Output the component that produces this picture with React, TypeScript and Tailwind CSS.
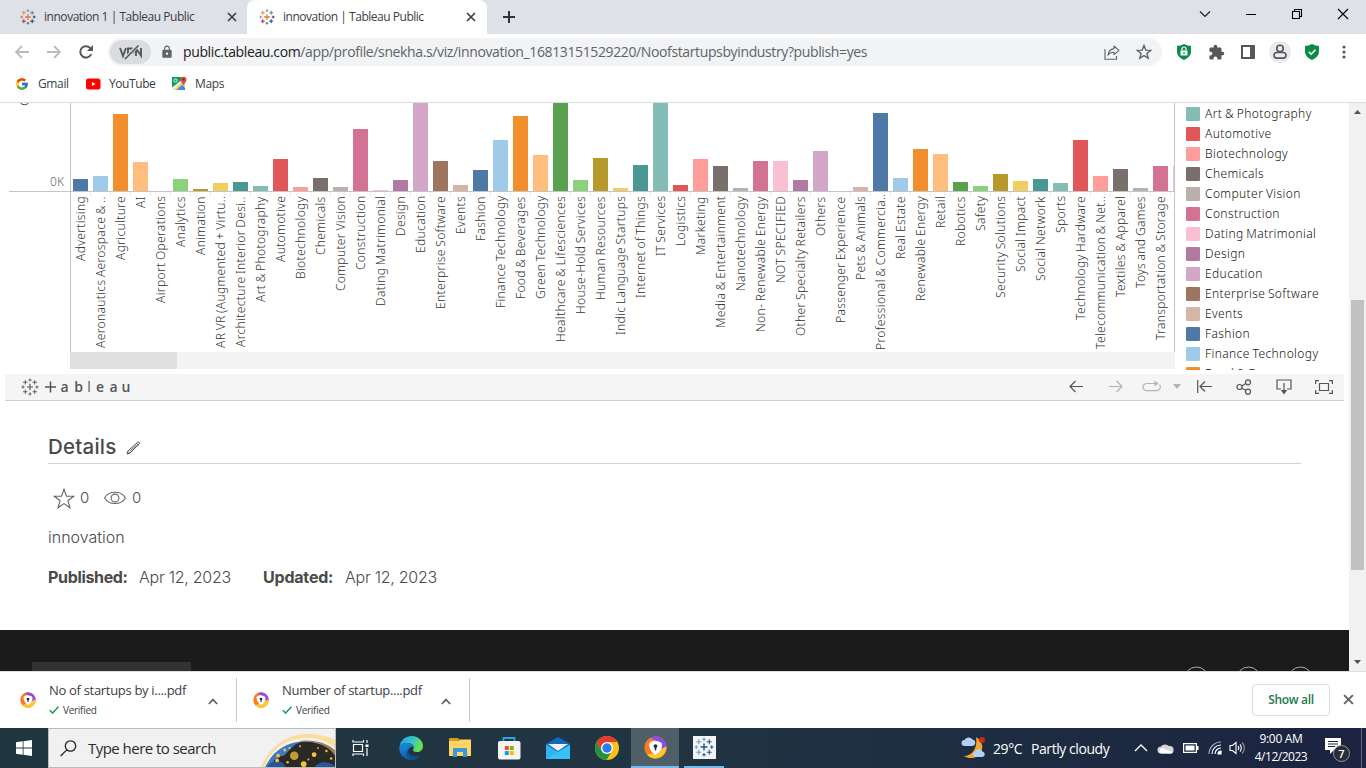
import React from "react";
import { FcGoogle } from "react-icons/fc";
import { MdExtension, MdLock } from "react-icons/md";

const C = {
  blue: "#4e79a7", sky: "#a0cbe8", orange: "#f28e2b", peach: "#ffbe7d", green: "#59a14f",
  lime: "#8cd17d", olive: "#b6992d", yellow: "#f1ce63", teal: "#499894", aqua: "#86bcb6",
  red: "#e15759", salmon: "#ff9d9a", stone: "#79706e", sand: "#bab0ac", rose: "#d37295",
  pink: "#fabfd2", plum: "#b07aa1", lilac: "#d4a6c8", brown: "#9d7660", tan: "#d7b5a6",
};

const bars: [string, number, string][] = [
  ["Advertising", 12, C.blue], ["Aeronautics Aerospace & ..", 15, C.sky], ["Agriculture", 77, C.orange],
  ["AI", 29, C.peach], ["Airport Operations", 0, C.green], ["Analytics", 12, C.lime],
  ["Animation", 2, C.olive], ["AR VR (Augmented + Virtu..", 8, C.yellow], ["Architecture Interior Desi..", 9, C.teal],
  ["Art & Photography", 5, C.aqua], ["Automotive", 32, C.red], ["Biotechnology", 4, C.salmon],
  ["Chemicals", 13, C.stone], ["Computer Vision", 4, C.sand], ["Construction", 62, C.rose],
  ["Dating Matrimonial", 1, C.pink], ["Design", 11, C.plum], ["Education", 88, C.lilac],
  ["Enterprise Software", 30, C.brown], ["Events", 6, C.tan], ["Fashion", 21, C.blue],
  ["Finance Technology", 51, C.sky], ["Food & Beverages", 75, C.orange], ["Green Technology", 36, C.peach],
  ["Healthcare & Lifesciences", 88, C.green], ["House-Hold Services", 11, C.lime], ["Human Resources", 33, C.olive],
  ["Indic Language Startups", 3, C.yellow], ["Internet of Things", 26, C.teal], ["IT Services", 88, C.aqua],
  ["Logistics", 6, C.red], ["Marketing", 32, C.salmon], ["Media & Entertainment", 25, C.stone],
  ["Nanotechnology", 3, C.sand], ["Non- Renewable Energy", 30, C.rose], ["NOT SPECIFIED", 30, C.pink],
  ["Other Specialty Retailers", 11, C.plum], ["Others", 40, C.lilac], ["Passenger Experience", 0, C.brown],
  ["Pets & Animals", 4, C.tan], ["Professional & Commercia..", 78, C.blue], ["Real Estate", 13, C.sky],
  ["Renewable Energy", 42, C.orange], ["Retail", 37, C.peach], ["Robotics", 9, C.green],
  ["Safety", 5, C.lime], ["Security Solutions", 17, C.olive], ["Social Impact", 10, C.yellow],
  ["Social Network", 12, C.teal], ["Sports", 8, C.aqua], ["Technology Hardware", 51, C.red],
  ["Telecommunication & Net..", 15, C.salmon], ["Textiles & Apparel", 22, C.stone], ["Toys and Games", 3, C.sand],
  ["Transportation & Storage", 25, C.rose], ["", 25, C.pink],
];

const legend: [string, string][] = [
  ["Art & Photography", C.aqua], ["Automotive", C.red], ["Biotechnology", C.salmon], ["Chemicals", C.stone],
  ["Computer Vision", C.sand], ["Construction", C.rose], ["Dating Matrimonial", C.pink], ["Design", C.plum],
  ["Education", C.lilac], ["Enterprise Software", C.brown], ["Events", C.tan], ["Fashion", C.blue],
  ["Finance Technology", C.sky], ["Food & Beverages", C.orange],
];

const cross = (x: number, y: number, r: number) => `M${x - r} ${y}h${2 * r}M${x} ${y - r}v${2 * r}`;

function TableauMark({ size, colors, width = 1 }: { size: number; colors: string[]; width?: number }) {
  const marks: [number, number, number][] = [
    [8, 8, 2.8], [8, 1.8, 1.4], [8, 14.2, 1.4], [1.8, 8, 1.4], [14.2, 8, 1.4],
    [3.8, 3.8, 2], [12.2, 3.8, 2], [3.8, 12.2, 2], [12.2, 12.2, 2],
  ];
  return (
    <svg width={size} height={size} viewBox="0 0 16 16" className="shrink-0" fill="none">
      {marks.map(([x, y, r], i) => (
        <path key={i} d={cross(x, y, r)} stroke={colors[i % colors.length]} strokeWidth={i === 0 ? width * 1.3 : width} />
      ))}
    </svg>
  );
}

const brand = ["#e8762c", "#7199a6", "#5c6692", "#7199a6", "#1f457e", "#eb912c", "#59879b", "#c72035", "#1f457e"];

function Close({ size, color }: { size: number; color: string }) {
  return (
    <svg width={size} height={size} viewBox="0 0 10 10" className="shrink-0">
      <path d="M1 1l8 8M9 1l-8 8" stroke={color} strokeWidth="1.7" />
    </svg>
  );
}

function TabStrip() {
  return (
    <div className="flex h-[34px] bg-[#dee1e6] text-[12px] leading-[34px] text-[#3c4043]">
      <div className="flex w-[247px] items-center pl-5 pr-[10px]">
        <TableauMark size={16} colors={brand} />
        <span className="ml-2 flex-1 whitespace-nowrap tracking-[-0.46px]">innovation 1 | Tableau Public</span>
        <Close size={10} color="#3c4043" />
      </div>
      <div className="flex w-[240px] items-center rounded-t-lg bg-white pl-3 pr-[11px]">
        <TableauMark size={16} colors={brand} />
        <span className="ml-2 flex-1 whitespace-nowrap tracking-[-0.48px]">innovation | Tableau Public</span>
        <Close size={10} color="#3c4043" />
      </div>
      <div className="flex flex-1 items-center pl-4">
        <svg width="12" height="12" viewBox="0 0 12 12"><path d="M6 0v12M0 6h12" stroke="#303338" strokeWidth="2" /></svg>
      </div>
      <div className="flex h-[28px] items-center gap-[34px] pr-[17px]">
        <svg width="12" height="12" viewBox="0 0 12 12"><path d="M1 3.5l5 5 5-5" fill="none" stroke="#222" strokeWidth="1.2" /></svg>
        <svg width="12" height="12" viewBox="0 0 12 12"><path d="M1 6.5h10" stroke="#000" /></svg>
        <svg width="12" height="12" viewBox="0 0 12 12"><path d="M1.5 3.5h7v7h-7zM3.5 3V1.5h7v7H9" fill="none" stroke="#000" strokeWidth="1.1" /></svg>
        <svg width="12" height="12" viewBox="0 0 12 12"><path d="M1 1l10 10M11 1L1 11" stroke="#000" strokeWidth="1.1" /></svg>
      </div>
    </div>
  );
}

function Shield({ kind }: { kind: "lock" | "check" }) {
  return (
    <svg width="16" height="18" viewBox="0 0 16 18">
      <path d="M8 1c2.5 1.3 4.500 1.800 7 2v5.500C15 12.500 12 15 8 17c-4-2-7-4.500-7-8.500V3c2.500-.2 4.500-.7 7-2z" fill="#0b8a48" />
      {kind === "lock" ? (
        <g><rect x="4.500" y="7.500" width="7" height="5" rx=".5" fill="#fff" /><path d="M6 7.500V6a2 2 0 0 1 4 0v1.500" fill="none" stroke="#fff" strokeWidth="1.200" /><path d="M8 9v2" stroke="#0b8a48" strokeWidth="1.200" /></g>
      ) : (
        <path d="M4.800 8.800l2.400 2.400 4.200-4.400" fill="none" stroke="#fff" strokeWidth="1.600" />
      )}
    </svg>
  );
}

const cell = "flex w-8 items-center justify-center";

function Toolbar() {
  return (
    <div className="flex h-[36px] items-center pl-[6px] pr-[6px]">
      <div className={cell}><svg width="14" height="14" viewBox="0 0 14 14"><path d="M14 7H1.500M7 1L1 7l6 6" fill="none" stroke="#babcbe" strokeWidth="1.800" /></svg></div>
      <div className={cell}><svg width="14" height="14" viewBox="0 0 14 14"><path d="M0 7h12.500M7 1l6 6-6 6" fill="none" stroke="#babcbe" strokeWidth="1.800" /></svg></div>
      <div className={cell}>
        <svg width="14" height="14" viewBox="0 0 14 14"><path d="M12.200 9.200A5.700 5.700 0 1 1 11.600 3.500" fill="none" stroke="#54575b" strokeWidth="2" /><path d="M14 0v6H8z" fill="#54575b" /></svg>
      </div>
      <div className="ml-[6px] flex h-[28px] flex-1 items-center rounded-full bg-[#f1f3f4] pl-[2px]">
        <div className="flex h-6 w-[41px] items-center justify-center rounded-full bg-[#dadce0]">
          <svg width="26" height="18" viewBox="0 0 26 18">
            <path d="M2 5l3 8 3-8M10 13V5.500h3.500a2 2 0 0 1 0 4.500H10M18 13V5.500l5 7V5" fill="none" stroke="#54575b" strokeWidth="1.900" />
            <path d="M8 15.500L20 2" stroke="#dadce0" strokeWidth="3.500" /><path d="M7 16L20.500 2.500" stroke="#54575b" strokeWidth="1.600" />
          </svg>
        </div>
        <MdLock size={14} color="#5f6368" className="ml-[9px] shrink-0" />
        <span className="ml-[9px] flex-1 whitespace-nowrap text-[14px] leading-[28px] tracking-[-0.374px] text-[#5f6368]"><span className="text-[#202124]">public.tableau.com</span>/app/profile/snekha.s/viz/innovation_16813151529220/Noofstartupsbyindustry?publish=yes</span>
        <div className={cell}>
          <svg width="16" height="15" viewBox="0 0 16 15" fill="none" stroke="#5f6368" strokeWidth="1.100"><path d="M1 4v10.200h11.500V11" /><path d="M10 1l5 4.300-5 4.300V7.200c-2.500 0-4.500.6-6 3 .3-3.500 2.200-6 6-6.600z" strokeLinejoin="round" /></svg>
        </div>
        <div className={cell}>
          <svg width="16" height="16" viewBox="0 0 16 16"><path d="M8 1.500l1.800 4.600 4.900.3-3.800 3.100 1.300 4.800L8 11.600l-4.200 2.700 1.300-4.800L1.300 6.400l4.900-.3z" fill="none" stroke="#5f6368" strokeWidth="1.400" /></svg>
        </div>
        <div className="w-[2px]" />
      </div>
      <div className="flex w-[198px] pl-[6px]">
        <div className={cell}><Shield kind="lock" /></div>
        <div className={cell}><MdExtension size={17} color="#54575b" /></div>
        <div className={cell}><svg width="14" height="14" viewBox="0 0 14 14"><path d="M1 1h12v12H1z" fill="none" stroke="#54575b" strokeWidth="2" /><path d="M9 1h4v12H9z" fill="#54575b" /></svg></div>
        <div className={cell}>
          <div className="flex h-[22px] w-[22px] items-center justify-center rounded-full bg-[#e8eaed]">
            <svg width="14" height="16" viewBox="0 0 14 16" fill="none" stroke="#54575b" strokeWidth="1.600"><circle cx="7" cy="4.500" r="3.200" /><rect x="1" y="8.500" width="12" height="5.600" rx="2.800" /></svg>
          </div>
        </div>
        <div className={cell}><Shield kind="check" /></div>
        <div className={cell}><svg width="4" height="14" viewBox="0 0 4 14" fill="#54575b"><circle cx="2" cy="2" r="1.600" /><circle cx="2" cy="7" r="1.600" /><circle cx="2" cy="12" r="1.600" /></svg></div>
      </div>
    </div>
  );
}

function Bookmarks() {
  return (
    <div className="flex h-[33px] items-center border-b border-[#dadce0] pb-[5px] pl-[15px] text-[12px] text-[#3c4043]">
      <FcGoogle size={14} />
      <span className="ml-[9px] w-[48px] tracking-[-0.37px]">Gmail</span>
      <svg width="15" height="12" viewBox="0 0 15 12"><rect x="0" y=".5" width="14.500" height="11" rx="2.500" fill="#f00" /><path d="M6 4v4l3.500-2z" fill="#fff" /></svg>
      <span className="ml-2 w-[63px] tracking-[-0.42px]">YouTube</span>
      <svg width="15" height="15" viewBox="0 0 15 15">
        <path d="M0 1h13v13H0z" fill="#0f9d58" /><path d="M3 14l5.500-6 5 6z" fill="#4285f4" /><path d="M0 14V11.500L9.500 4l2 2L3 14z" fill="#fff" opacity=".9" /><path d="M8 7l5 5V4z" fill="#cfd3d6" />
        <path d="M2 14L9 7l1.500 1.500L4.500 14z" fill="#fc3" />
        <path d="M11.500 10c0-2.500-3-3.500-3-6.300a3 3 0 0 1 6 0c0 2.800-3 3.800-3 6.300z" fill="#dd4b3e" /><circle cx="11.500" cy="3.500" r="1.100" fill="#7c2118" /><circle cx="3.500" cy="4.500" r="1.600" fill="none" stroke="#fff" strokeWidth=".9" />
      </svg>
      <span className="ml-2 tracking-[-0.36px]">Maps</span>
    </div>
  );
}

const label = "font-['Noto_Sans','Open_Sans',sans-serif] font-light text-[12px] whitespace-nowrap";

function Chart() {
  return (
    <div className="flex h-[267px] overflow-hidden">
      <div className="flex w-[70px] flex-col pl-[9px]">
        <div className={`${label} flex h-[89px] flex-col justify-between overflow-hidden border-b border-[#c4c4c4] text-[#666]`}>
          <svg width="10" height="3" viewBox="0 0 10 3" className="ml-[11px]"><path d="M1 0c0 2.200 7 2.200 7 0" fill="none" stroke="#333" /></svg>
          <span className="self-end pr-[6px] leading-[18px]">0K</span>
        </div>
      </div>
      <div className="flex w-[1105px] flex-col">
        <div className="flex h-[249px] overflow-hidden border-x border-[#c4c4c4]">
          {bars.map(([name, h, color], i) => (
            <div key={i} className="flex w-5 shrink-0 flex-col">
              <div className="flex h-[89px] flex-col justify-end border-b border-[#c4c4c4] pl-[2px]">
                <div className="w-[15px]" style={{ height: h, backgroundColor: color }} />
              </div>
              <div className="ml-[19px] h-1 w-px bg-[#ebebeb]" />
              <div className={`${label} flex w-5 rotate-180 items-end [writing-mode:vertical-rl] [word-spacing:-1px] h-[154px] leading-5 tracking-[0.36px] text-[#333]`}>
                <span className="h-full w-5 text-right">{name}</span>
              </div>
            </div>
          ))}
        </div>
        <div className="mt-0 h-[17px] bg-[#f4f4f4]"><div className="h-full w-[107px] bg-[#e0e0e0]" /></div>
      </div>
      <div className="flex flex-1 flex-col pl-[11px] pt-[1px]">
        {legend.map(([name, color]) => (
          <div key={name} className="flex h-5 shrink-0 items-center">
            <div className="h-[14px] w-[14px] rounded-[1px]" style={{ backgroundColor: color }} />
            <span className={`${label} ml-[5px] leading-5 tracking-[0.4px] [word-spacing:-0.8px] text-[#111]`}>{name}</span>
          </div>
        ))}
      </div>
    </div>
  );
}

function VizBar() {
  const s = { fill: "none", stroke: "#555", strokeWidth: 1.2 };
  return (
    <div className="mx-[5px] mt-1 flex h-[27px] items-center border-b border-[#d0d0d0] bg-[#f5f5f5] pb-px">
      <div className="ml-[16px] flex"><TableauMark size={18} colors={["#555"]} width={0.8} /></div>
      <div className="ml-[4px] flex flex-1 text-center font-['Open_Sans',sans-serif] text-[14px] font-semibold leading-[26px] text-[#555]">
        <span className="flex w-[14px] items-center justify-center"><svg width="11" height="12" viewBox="0 0 11 12"><path d="M5.500 0.500v11M0 6h11" stroke="#555" strokeWidth="1.500" /></svg></span>
        <span className="w-[15px]">a</span><span className="w-[13px]">b</span><span className="w-[8px] font-normal">l</span>
        <span className="w-[14px]">e</span><span className="w-[13px]">a</span><span className="w-[12px]">u</span>
      </div>
      <svg className="mr-[26px]" width="14" height="13" viewBox="0 0 14 13" {...s}><path d="M14 6.500H1M6.500 1L1 6.500 6.500 12" /></svg>
      <svg className="mr-[19px]" width="14" height="13" viewBox="0 0 14 13" {...s} stroke="#b4b4b4"><path d="M0 6.500h13M7.500 1L13 6.500 7.500 12" /></svg>
      <svg width="20" height="13" viewBox="0 0 20 13" {...s} stroke="#b4b4b4"><path d="M13 3.500H5a4 3.600 0 0 0 0 7.200h10a3.500 3.600 0 0 0 2.500-6M10 3.500h5" /><path d="M12.500.5v6l4-3z" fill="#b4b4b4" stroke="none" /></svg>
      <svg className="ml-[11px] mr-[16px]" width="8" height="5" viewBox="0 0 8 5"><path d="M0 0h8L4 5z" fill="#b4b4b4" /></svg>
      <svg className="mr-[24px]" width="15" height="13" viewBox="0 0 15 13" {...s}><path d="M.7 0v13M15 6.500H3M8 1.500L3 6.500l5 5" /></svg>
      <svg className="mr-[24px]" width="16" height="16" viewBox="0 0 16 16" {...s}><circle cx="3.500" cy="8" r="2.500" /><circle cx="12" cy="3.300" r="2.500" /><circle cx="12" cy="12.700" r="2.500" /><path d="M5.800 6.900l4-2.300M5.800 9.100l4 2.300" /></svg>
      <svg className="mr-[23px]" width="16" height="16" viewBox="0 0 16 16" {...s}><path d="M5 10H1V1h14v9h-4M8 4v8" /><path d="M4.800 11h6.400L8 15.500z" fill="#555" stroke="none" /></svg>
      <svg className="mr-[11px]" width="18" height="14" viewBox="0 0 18 14" {...s}><path d="M4.500 3.500h9v7h-9zM.6 4V.6H4M14 .6h3.400V4M17.400 10v3.400H14M4 13.400H.6V10" /></svg>
    </div>
  );
}

const thin = "font-['Inter','Liberation_Sans',sans-serif] font-light leading-6 text-[#4a4a4a]";

function Details() {
  return (
    <div className="flex h-[229px] flex-col pl-12 pr-12 pt-[32px] font-['Inter','Liberation_Sans',sans-serif]">
      <div className="flex h-[31px] items-center border-b border-[#d4d4d4] pb-[2px]">
        <h2 className="text-[20.500px] font-medium leading-[28px] tracking-[0.22px] text-[#4a4a4a]">Details</h2>
        <svg className="ml-[10px] mt-[1px]" width="15" height="14" viewBox="0 0 15 14" fill="none" stroke="#555" strokeWidth="1"><path d="M1 13l.8-3L11.800 1.200c.8-.7 2.400.6 1.700 1.500L4 12zM1.800 10.200L3.600 12M10.500 2.300l2 1.800M4 10.200l6.500-6" /></svg>
      </div>
      <div className="mt-[22px] flex h-6 items-center">
        <svg className="ml-[5px]" width="22" height="21" viewBox="0 0 22 21"><path d="M11 1.200l2.500 6.900 7.200.2-5.800 4.400 2.100 7.100-6-4.200-6 4.200 2.100-7.100L1.300 8.300l7.200-.2z" fill="none" stroke="#666" strokeWidth="1.100" /></svg>
        <span className={`${thin} ml-[5px] w-[24px] text-[15px]`}>0</span>
        <svg width="22" height="14" viewBox="0 0 22 14" fill="none" stroke="#666" strokeWidth="1.100"><path d="M.6 7C5 -.6 17 -.6 21.400 7 17 14.300 5 14.300.6 7z" /><circle cx="11" cy="7" r="3.900" /></svg>
        <span className={`${thin} ml-[6px] text-[15px]`}>0</span>
      </div>
      <p className={`${thin} mt-[15px] text-[16px]`}>innovation</p>
      <div className={`${thin} mt-4 flex whitespace-nowrap text-[16px]`}>
        <span className="w-[91px] font-bold tracking-[-0.34px]">Published:</span>
        <span className="w-[124px] tracking-[-0.25px]">Apr 12, 2023</span>
        <span className="w-[82px] font-bold tracking-[-0.2px]">Updated:</span>
        <span className="tracking-[-0.25px]">Apr 12, 2023</span>
      </div>
    </div>
  );
}

function Footer() {
  return (
    <div className="flex h-[41px] items-end overflow-hidden bg-[#1b1b1b] pl-8">
      <div className="h-[9px] w-[159px] bg-[#323232]" />
      <div className="ml-auto flex h-[5px] gap-[27px] pr-[36px]">
        {[0, 1, 2].map((i) => (
          <svg key={i} width="25" height="5" viewBox="0 0 25 5"><circle cx="12.500" cy="13" r="12" fill="none" stroke="#aaa" /></svg>
        ))}
      </div>
    </div>
  );
}

function Scrollbar() {
  return (
    <div className="flex w-[17px] flex-col items-center justify-between bg-[#f1f1f1]">
      <svg className="mt-[7px]" width="7" height="4" viewBox="0 0 7 4"><path d="M0 4l3.500-4L7 4z" fill="#505050" /></svg>
      <div className="mt-[186px] h-[270px] w-[13px] bg-[#c1c1c1]" />
      <svg className="mb-[7px] mt-auto" width="7" height="4" viewBox="0 0 7 4"><path d="M0 0l3.500 4L7 0z" fill="#505050" /></svg>
    </div>
  );
}

function Swirl({ size }: { size: number }) {
  return (
    <svg width={size} height={size} viewBox="0 0 24 24" className="shrink-0">
      <circle cx="12" cy="12" r="11.500" fill="#ff7a1a" />
      <path d="M7 1.700A11.500 11.500 0 0 1 23.400 13L17 15 12 5z" fill="#8a4df0" />
      <path d="M23.400 11A11.500 11.500 0 0 1 3 19.200l7-1.200 9-5z" fill="#ffc62e" />
      <path d="M5 8C9 3 15 5 18.500 7.500c1 6-2 9.500-6.500 12-4-2-6-5.500-7-11.500z" fill="#fff" />
      <circle cx="12" cy="10.500" r="2" fill="#222b4a" /><path d="M11.200 11h1.600v4h-1.600z" fill="#222b4a" />
    </svg>
  );
}

function Download({ name }: { name: string }) {
  return (
    <div className="flex w-[233px] items-center">
      <div className="flex flex-1 items-center pl-4">
        <Swirl size={16} />
        <div className="ml-[13px] flex flex-col">
          <span className="whitespace-nowrap text-[13px] leading-[19px] tracking-[-0.31px] text-[#3c4043]">{name}</span>
          <span className="flex h-5 items-center pt-px text-[10px] tracking-[-0.27px] text-[#3c4043]">
            <svg className="mr-[4px]" width="10" height="8" viewBox="0 0 10 8"><path d="M.7 4.200l2.900 2.900L9.400.8" fill="none" stroke="#1e9e58" strokeWidth="1.500" /></svg>Verified
          </span>
        </div>
      </div>
      <svg className="mr-[18px] mt-[2px]" width="10" height="7" viewBox="0 0 10 7"><path d="M.8 6L5 1.600 9.200 6" fill="none" stroke="#5f6368" strokeWidth="1.700" /></svg>
      <div className="h-[44px] w-px bg-[#c8cacd]" />
    </div>
  );
}

function Downloads() {
  return (
    <div className="flex h-[57px] items-center border-t border-[#dadce0] bg-white pl-[4px]">
      <Download name="No of startups by i....pdf" />
      <Download name="Number of startup....pdf" />
      <div className="ml-auto flex items-center pb-px pr-[12px]">
        <div className="flex h-8 w-[78px] items-center justify-center rounded border border-[#dadce0] text-[12px] font-semibold tracking-[-0.3px] text-[#1d7a4a]">Show all</div>
        <span className="ml-[13px]"><Close size={11} color="#5f6368" /></span>
      </div>
    </div>
  );
}

const app = "flex h-full w-[49px] items-center justify-center";

function Taskbar() {
  return (
    <div className="flex h-10 items-center bg-linear-to-r from-[#21373f] via-[#203442] to-[#1b2340] text-white">
      <div className="flex w-12 items-center justify-center">
        <svg width="16" height="16" viewBox="0 0 16 16" fill="#fff"><path d="M0 2.300l6.700-1v6.300H0zM7.500 1.200L16 0v7.600H7.500zM0 8.400h6.700v6.300l-6.700-1zM7.500 8.400H16V16l-8.500-1.200z" /></svg>
      </div>
      <div className="flex h-10 w-[288px] items-center overflow-hidden border border-[#b9bcbc] bg-[#f1f1f1] pl-[11px] text-[#2b2b2b]">
        <svg width="17" height="17" viewBox="0 0 17 17" fill="none" stroke="#222" strokeWidth="1.300"><circle cx="10.500" cy="6" r="5.200" /><path d="M6.800 9.900L.6 16" /></svg>
        <span className="ml-[11px] flex-1 whitespace-nowrap text-[15px] tracking-[-0.53px]">Type here to search</span>
        <svg className="mt-1 shrink-0" width="74" height="36" viewBox="0 0 78 38">
          <path d="M3 38C11 16 28 7 47 6c12 0 22 3 31 10V8C66 3 57 2 47 2 26 3 8 16 0 38z" fill="#fbdc98" />
          <path d="M4 38C12 19 28 10 47 10c12 0 22 4 31 12v16z" fill="#3f78c0" />
          <path d="M33 16C40 9 50 9 58 12c10 2 14 5 20 10v16H10c2-9 8-12 14-13z" fill="#2a2a24" />
          <path d="M36 12c14-5 34 0 42 13v-6C70 12 58 8 44 9z" fill="#9b7d5b" />
          <path d="M6 38c3-8 14-10 19-3l1 3zM56 38c4-7 14-8 22-2v2z" fill="#2a5699" />
          <g fill="#f5c33b"><circle cx="35" cy="25" r="4.500" opacity=".75" /><circle cx="56" cy="24" r="2.500" /><circle cx="45" cy="34" r="3" /><circle cx="25" cy="19" r="1.500" /><circle cx="18" cy="25" r="2" /><circle cx="30" cy="17" r="1.200" /><circle cx="69" cy="20" r="1.300" /><circle cx="60" cy="17" r="1" /><circle cx="74" cy="28" r="1.300" /><circle cx="28" cy="32" r="1.300" /><circle cx="41" cy="15" r="1" /><circle cx="17" cy="30" r="2" /><circle cx="50" cy="29" r="1" /></g>
        </svg>
      </div>
      <div className={app}>
        <svg width="17" height="16" viewBox="0 0 17 16" fill="none" stroke="#fff" strokeWidth="1.200"><path d="M1.500 4.500h9v7h-9zM1 0v2h10.500V0M1 16v-2h10.500v2M15 0v3M15 8v8" /><path d="M13.500 4.500h3v2.500h-3z" fill="#fff" stroke="none" /></svg>
      </div>
      <div className={`${app} ml-[1px]`}>
        <svg width="24" height="24" viewBox="0 0 24 24">
          <defs>
            <linearGradient id="eg" x1="0" y1="0" x2="1" y2="0.300"><stop offset="0" stopColor="#1d9fe0" /><stop offset=".55" stopColor="#35c1d4" /><stop offset="1" stopColor="#6be04d" /></linearGradient>
            <linearGradient id="eb" x1="0" y1="0" x2="0.500" y2="1"><stop offset="0" stopColor="#1a92e0" /><stop offset="1" stopColor="#0d55a8" /></linearGradient>
          </defs>
          <path d="M.5 10C2 3.500 7 0 12.500 0 19 0 24 4.500 24 10c0 4-3 6-6 6-2.500 0-4-1-4-2 0-.8.8-1 .8-2.500C14.800 9 12 7 8.500 7 5 7 2 8 .5 10z" fill="url(#eg)" />
          <path d="M.3 11C1.500 8.500 4.500 7 8 7c3.500 0 6.500 2 6.800 4.300-3-1.300-6 1-5.800 4.200.3 4.500 6 7 12.500 3.800C18.500 23.500 15 24 12 24 5 24-.5 18 .3 11z" fill="url(#eb)" />
          <path d="M9 14c-.5 5 5 8.500 12.700 5-2 3.500-6 5-9 5C7 22 5.500 17 9 14z" fill="#0f4a8c" opacity=".7" />
        </svg>
      </div>
      <div className={app}>
        <svg width="22" height="20" viewBox="0 0 22 20"><path d="M0 0h9l2 2h-2v4H0z" fill="#d99a1c" /><path d="M0 3h9l2-1.500h11V18H0z" fill="#ffd566" /><path d="M4 10h14v9h-4v-5H8v5H4z" fill="#3f97d8" /></svg>
      </div>
      <div className={app}>
        <svg width="24" height="24" viewBox="0 0 24 24"><path d="M6.500 7V2h11v5" fill="none" stroke="#27a8e0" strokeWidth="1.800" /><rect x="1" y="5" width="22.500" height="18.500" rx="2" fill="#f4f4f4" /><path d="M7.800 10h4v4h-4z" fill="#f25022" /><path d="M12.800 10h4v4h-4z" fill="#7fba00" /><path d="M7.800 15h4v4h-4z" fill="#00a4ef" /><path d="M12.800 15h4v4h-4z" fill="#ffb900" /></svg>
      </div>
      <div className={app}>
        <svg width="24" height="22" viewBox="0 0 24 22"><path d="M0 7l12-7 12 7v15H0z" fill="#0f6cbd" /><path d="M0 7.500L12 15l12-7.500V22H0z" fill="#2fb4f0" /><path d="M2 7h20l-10 7z" fill="#f2f2f2" /><path d="M0 22l24-14v14z" fill="#41c8f8" opacity=".6" /></svg>
      </div>
      <div className={app}>
        <svg width="24" height="24" viewBox="0 0 24 24"><circle cx="12" cy="12" r="12" fill="#fbc116" /><path d="M1.600 6A12 12 0 0 1 22.400 6H12L7 15z" fill="#e33b2e" /><path d="M1.600 6A12 12 0 0 0 11.500 24L17 15l-5 2-5-2z" fill="#229342" /><circle cx="12" cy="12" r="6" fill="#fff" /><circle cx="12" cy="12" r="4.700" fill="#2e78f0" /></svg>
      </div>
      <div className="flex h-full w-[48px] items-center justify-center border-b-2 border-[#76b9ed] bg-[#4e5f68]"><Swirl size={23} /></div>
      <div className="ml-[5px] flex h-full w-[40px] items-center justify-center border-b-2 border-[#76b9ed]">
        <div className="flex h-[23px] w-[23px] items-center justify-center bg-[#f3f3f3]"><TableauMark size={20} colors={["#1f5f8f", "#6f9fba"]} width={0.9} /></div>
      </div>
      <div className="ml-auto flex items-center text-[14px]">
        <svg width="25" height="24" viewBox="0 0 25 24"><path d="M15 1c6 4 8 10 5 15-3 6-11 8-17 4 8 0 14-8 12-19z" fill="#f3a72b" /><circle cx="21" cy="4" r="3" fill="#c42b1c" /><path d="M3.500 10a3 3 0 0 1 0-6 4.500 4 0 0 1 8-.5 3.300 3.300 0 0 1 0 6.500zM14 21a3 3 0 0 1 0-5.500 4 4 0 0 1 7.500 0 2.800 2.800 0 0 1 0 5.500z" fill="#b4d0f7" /></svg>
        <span className="ml-[7px] w-[38px] tracking-[-0.4px]">29°C</span>
        <span className="w-[103px] whitespace-nowrap tracking-[-0.43px]">Partly cloudy</span>
        <svg width="14" height="8" viewBox="0 0 14 8"><path d="M1 7l6-6 6 6" fill="none" stroke="#fff" strokeWidth="1.300" /></svg>
        <svg className="ml-[9px]" width="17" height="11" viewBox="0 0 17 11"><path d="M4 10.500a3.500 3.500 0 0 1 0-7A5 4.500 0 0 1 12 3a3.800 3.800 0 0 1 1.500 7.500z" fill="#d6d6d6" /><path d="M4 10.500a3 3 0 0 1 1-5.500l11 4c-.5 1-1.500 1.500-2.500 1.500z" fill="#fff" /></svg>
        <svg className="ml-[9px]" width="16" height="10" viewBox="0 0 16 10"><path d="M.6.6h12.800v8.800H.6z" fill="none" stroke="#fff" strokeWidth="1.200" /><path d="M2.500 2.500h9v5h-9zM14 3h1.500v4H14z" fill="#fff" /></svg>
        <svg className="ml-[9px]" width="14" height="14" viewBox="0 0 14 14" fill="none" stroke="#fff" strokeWidth="1.200"><path d="M1 13A12 12 0 0 1 13 1" opacity=".6" /><path d="M4 13a9 9 0 0 1 9-9M7 13a6 6 0 0 1 6-6" /><path d="M10 13a3 3 0 0 1 3-3v3z" fill="#fff" /></svg>
        <svg className="ml-[7px]" width="17" height="14" viewBox="0 0 17 14" fill="none" stroke="#fff" strokeWidth="1.100"><path d="M1 4.500h2.500L7 1.500v11L3.500 9.500H1z" /><path d="M9 5c.8 1 .8 3 0 4M11 3.300c1.700 2 1.700 5.400 0 7.400" /><path d="M13.200 1.500c2.800 3 2.800 8 0 11" opacity=".5" /></svg>
        <div className="flex w-[70px] flex-col items-center text-[12px] leading-[18px]">
          <span className="tracking-[-0.3px]">9:00 AM</span><span className="tracking-[-0.48px]">4/12/2023</span>
        </div>
        <div className="relative ml-[9px] mt-[3px] h-[24px] w-[25px]">
          <svg width="16" height="16" viewBox="0 0 16 16"><path d="M0 0h16v12H9l-4 4v-4H0z" fill="#fff" /><path d="M3 3.500h10M3 6h10M3 8.500h7" stroke="#1b2541" /></svg>
          <div className="absolute left-[8px] top-[7px] flex h-[17px] w-[17px] items-center justify-center rounded-full border border-[#999] bg-[#2a2c36] text-[11px] font-semibold leading-none">7</div>
        </div>
        <div className="ml-[11px] mr-[4px] h-10 w-px bg-[#62687a]" />
      </div>
    </div>
  );
}

export default function App() {
  return (
    <div className="flex h-[768px] w-[1366px] flex-col overflow-hidden bg-white font-['Open_Sans','Noto_Sans',sans-serif]">
      <TabStrip />
      <Toolbar />
      <Bookmarks />
      <div className="flex h-[568px]">
        <div className="flex w-[1349px] flex-col">
          <Chart />
          <VizBar />
          <Details />
          <Footer />
        </div>
        <Scrollbar />
      </div>
      <Downloads />
      <Taskbar />
    </div>
  );
}
